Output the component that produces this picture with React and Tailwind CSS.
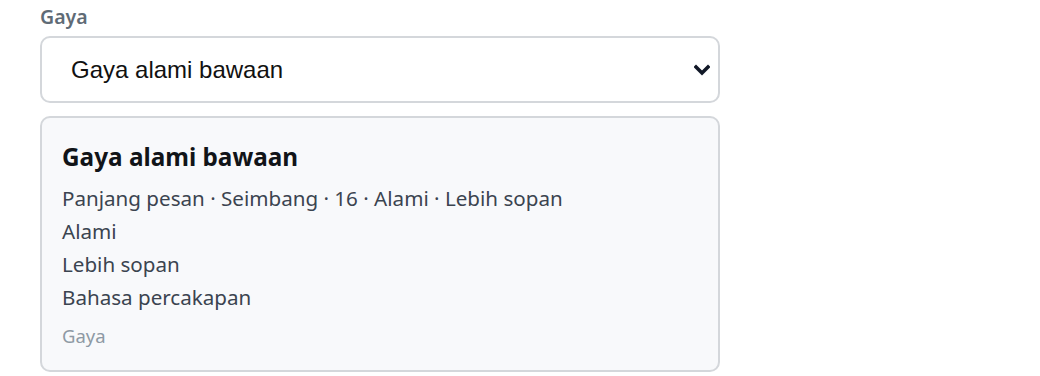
const SUMMARY = [
  'Panjang pesan · Seimbang · 16 · Alami · Lebih sopan',
  'Alami',
  'Lebih sopan',
  'Bahasa percakapan',
];

const ChevronDown = () => (
  <svg width="16" height="12" viewBox="0 0 16 12" fill="none" className="shrink-0">
    <path d="M2 3l6 6 6-6" stroke="#111827" strokeWidth="3.6" strokeLinecap="square" />
  </svg>
);

const App = () => {
  return (
    <div className="min-h-[376px] bg-white px-10 pt-[5px] font-['Noto_Sans',sans-serif]">
      <div className="w-[680px]">
        {/* Field label */}
        <label className="block text-[19.5px] leading-6 font-semibold text-[#5f6b76]">Gaya</label>

        {/* Select */}
        <div className="mt-[7px] flex h-[67px] items-center justify-between rounded-[10px] border-2 border-[#d4d7db] bg-white pl-[29px] pr-[8px]">
          <span className="font-['Liberation_Sans',Arial,sans-serif] text-[24px] text-[#111111]">
            Gaya alami bawaan
          </span>
          <ChevronDown />
        </div>

        {/* Preview card */}
        <div className="mt-[13px] rounded-[10px] border-2 border-[#d4d7db] bg-[#f8f9fb] px-5 pt-[25px] pb-[22px]">
          <h3 className="text-[24.3px] leading-7 font-bold text-[#111418]">Gaya alami bawaan</h3>
          <div className="mt-[11px]">
            {SUMMARY.map((line) => (
              <p key={line} className="text-[20.6px] leading-[33px] text-[#3b4450]">{line}</p>
            ))}
          </div>
          <p className="mt-[10px] text-[18.5px] leading-6 text-[#8e99a4]">Gaya</p>
        </div>
      </div>
    </div>
  );
};

export default App;
